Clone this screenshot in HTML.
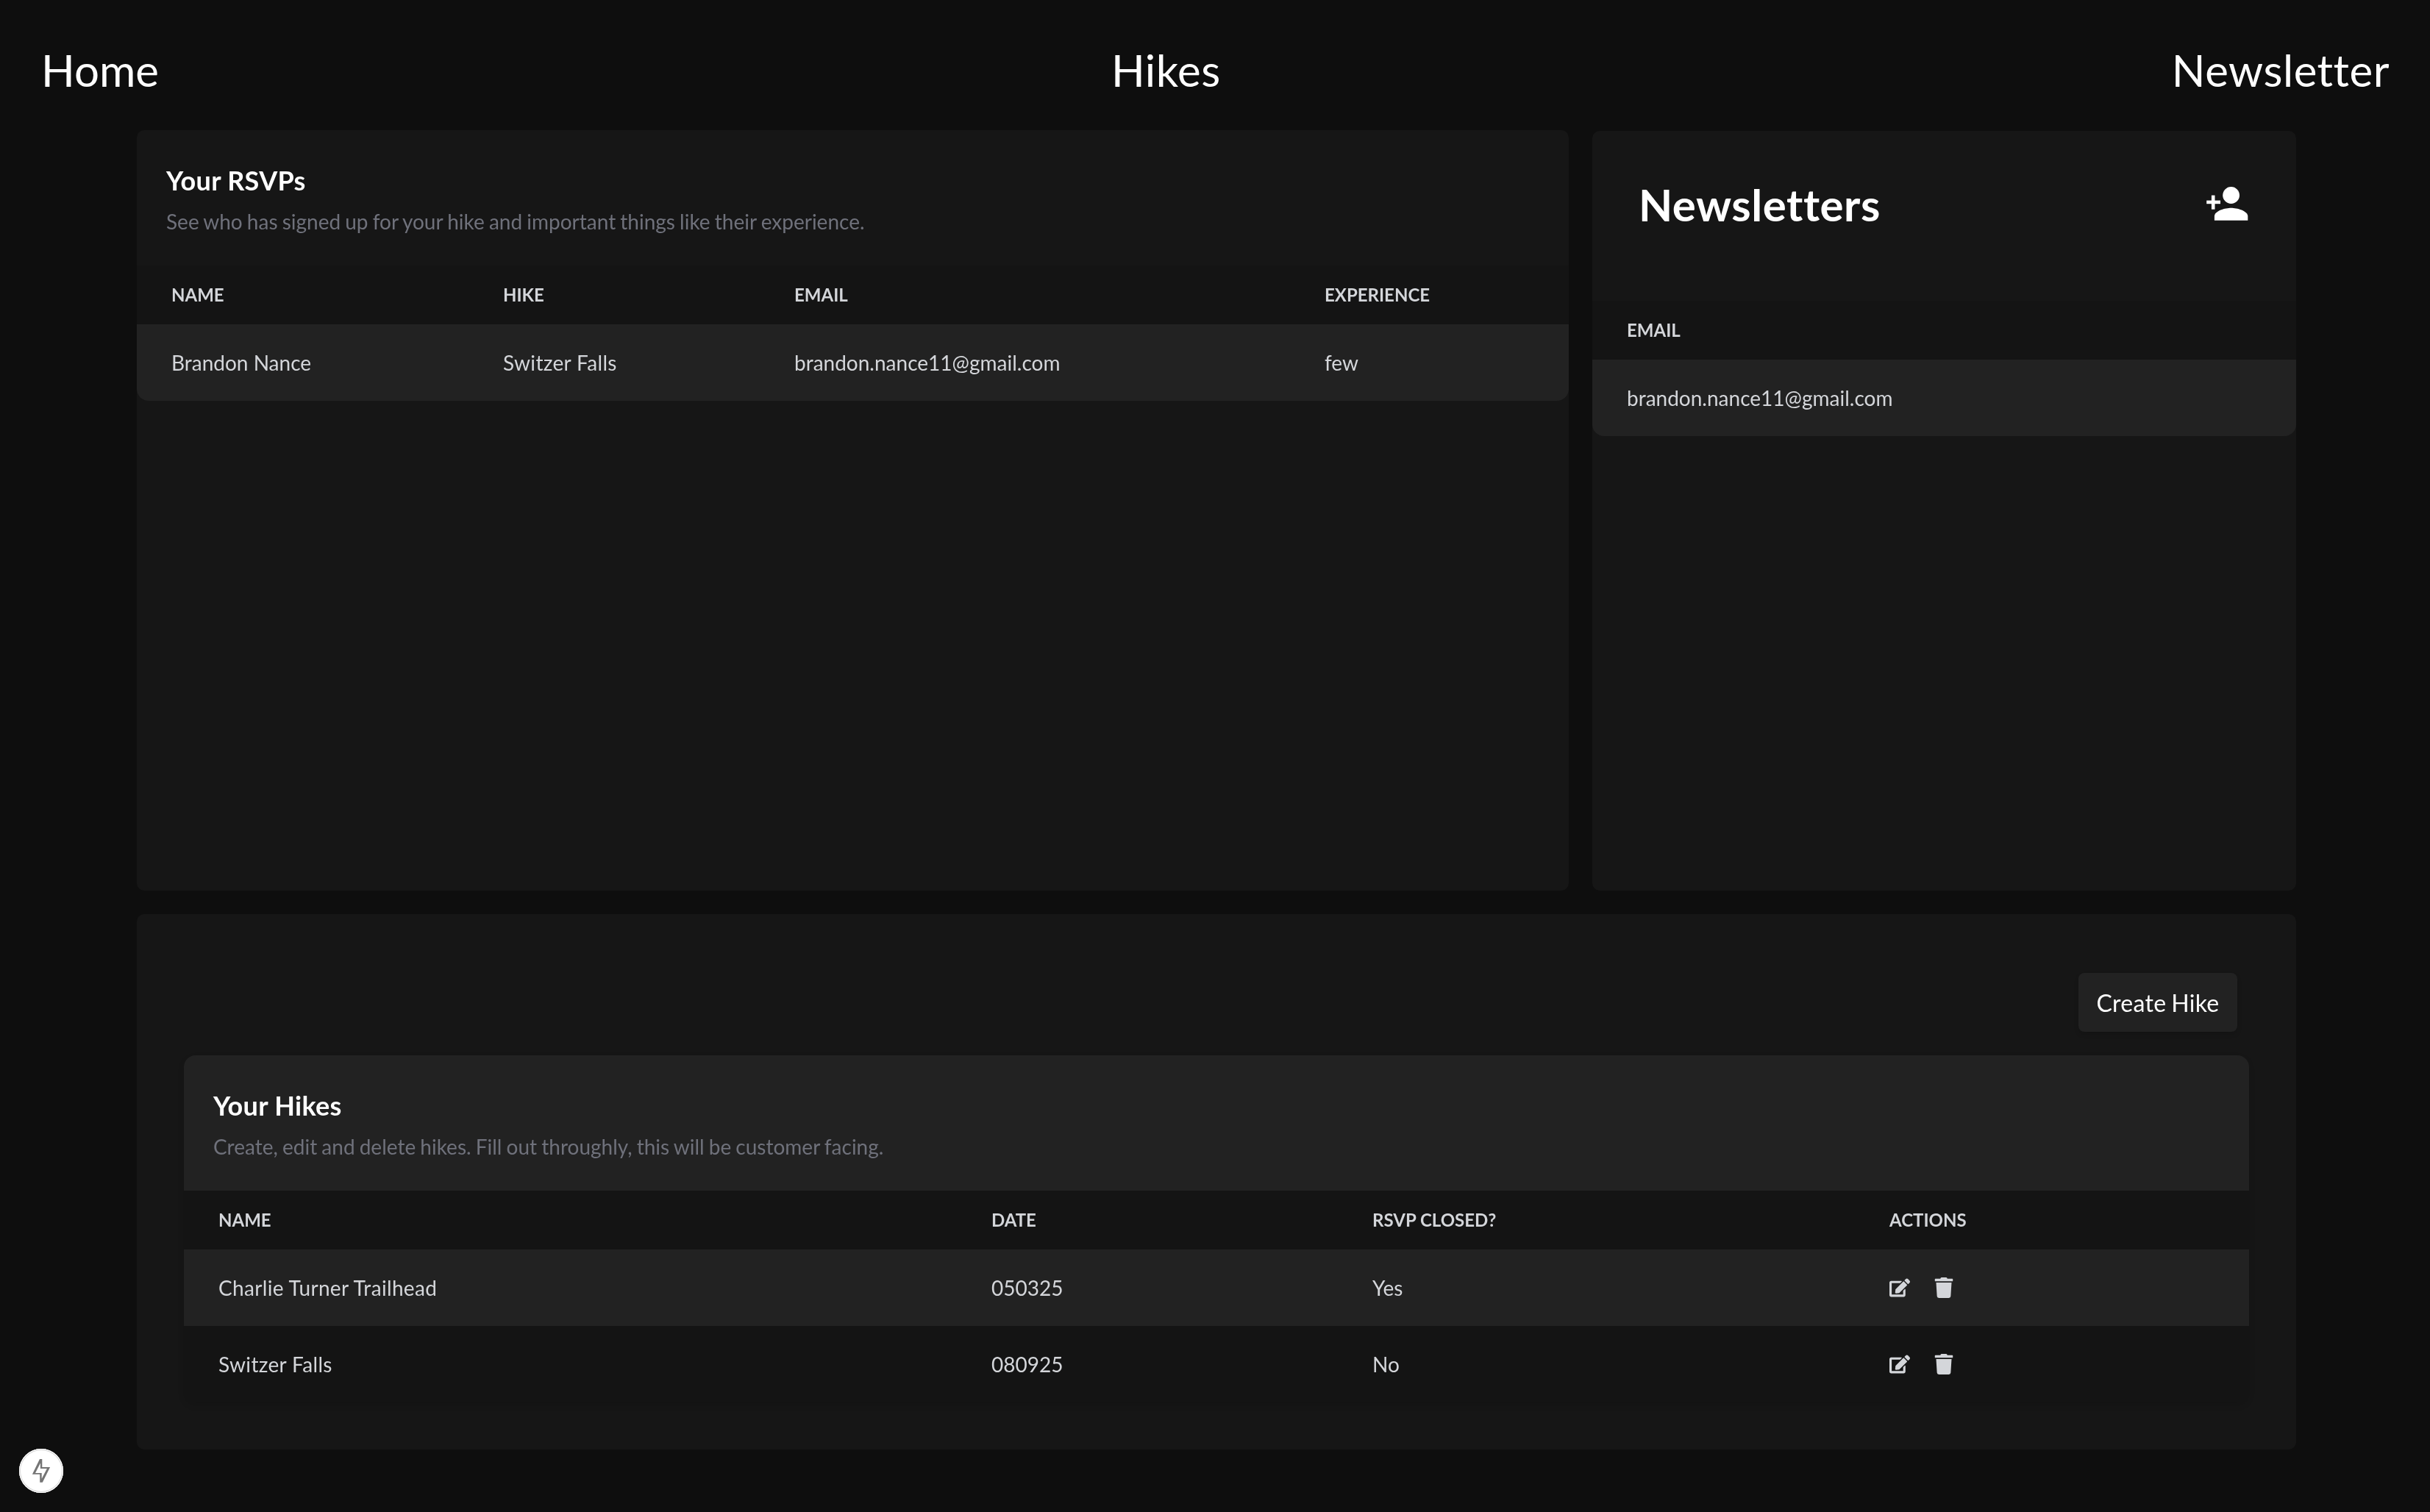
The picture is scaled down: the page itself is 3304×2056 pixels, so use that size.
<!DOCTYPE html>
<html lang="en">
<head>
<meta charset="utf-8">
<title>Admin Dashboard</title>
<style>
*{box-sizing:border-box;margin:0;padding:0}
html,body{width:3304px;height:2056px;overflow:hidden;background:#0e0e0e}
body{position:relative;font-family:Lato,"Liberation Sans",sans-serif;color:#fff;-webkit-font-smoothing:antialiased;font-kerning:normal}
#root{position:absolute;left:0;top:0;width:3304px;height:2056px;will-change:transform}
a{color:inherit;text-decoration:none}
nav a{position:absolute;top:59px;font-size:60px;line-height:72px;font-weight:400;color:#fff;white-space:nowrap}
nav .n1{left:56px}
nav .n2{left:1511px;letter-spacing:.5px}
nav .n3{right:55px;letter-spacing:.5px}
.card{position:absolute;background:#161616;border-radius:10px}
.tw{position:absolute;left:0;top:0;width:100%;border-radius:16px;overflow:hidden}
.cap{height:184px;padding:40px}
.cap h2{font-size:36px;line-height:56px;font-weight:700;color:#fff;letter-spacing:.3px}
.cap p{margin-top:8px;font-size:28px;line-height:40px;font-weight:400;color:#6f717b;white-space:nowrap;word-spacing:-1.04px}
table{width:100%;border-collapse:collapse;table-layout:fixed}
th,td{padding:0 48px 0 47px;text-align:left;vertical-align:middle;white-space:nowrap;color:#d4d6da}
thead tr{height:80px;background:#141414}
th{font-size:24px;line-height:32px;font-weight:700;text-transform:uppercase}
tbody tr{height:104px}
td{font-size:28px;line-height:40px;font-weight:400}
td.ls{letter-spacing:.33px}
tr.hi{background:#222}
tr.lo{background:#141414}
#rsvps{left:186px;top:177px;width:1947px;height:1034px}
#news{left:2165px;top:178px;width:957px;height:1033px}
#news .head{height:231px;position:relative}
#news h1{position:absolute;left:63px;top:64px;letter-spacing:.55px;font-size:60px;line-height:72px;font-weight:700;color:#fff}
#news .add{position:absolute;left:826px;top:65px;width:68px;height:68px}
#hikes{left:186px;top:1243px;width:2936px;height:728px}
#hikes .btn{position:absolute;left:2640px;top:80px;width:216px;height:80px;border-radius:8px;background:#222;color:#fff;font-size:32px;line-height:82px;letter-spacing:.32px;word-spacing:-1.8px;box-shadow:0 4px 6px rgba(0,0,0,.12);text-align:center;border:0;font-family:inherit}
#hikes .tw{left:64px;top:192px;width:2808px;box-shadow:0 4px 8px rgba(0,0,0,.12)}
#hikes .cap{background:#222}
.acts{display:flex;align-items:center;gap:32px}
.acts svg{width:28px;height:28px;fill:#d4d6da;display:block}
#dev{position:absolute;left:26px;top:1970px;width:60px;height:60px;border-radius:50%;background:#fff;box-shadow:inset 0 0 0 1px #fff,inset 0 0 0 2px #d6d6d6}
#dev svg{position:absolute;left:0;top:0;width:60px;height:60px}

/* metric compensation when Lato is unavailable and Liberation Sans is used */
.nl nav a{margin-top:2px}
.nl nav .n2{letter-spacing:-.5px}
.nl nav .n3{letter-spacing:1.28px}
.nl .cap h2{position:relative;top:2px}
.nl #rsvps h2{letter-spacing:-1.9px}
.nl #hikes h2{letter-spacing:-1.37px}
.nl .cap p{position:relative;top:1px;letter-spacing:-.15px}
.nl th,.nl td{position:relative;top:1px}
.nl th{letter-spacing:-.9px}
.nl td{letter-spacing:-.42px}
.nl td.ls{letter-spacing:-.25px}
.nl .acts{position:relative;top:-1px}
.nl #news h1{margin-top:2px;letter-spacing:-.75px}
.nl #hikes .btn{letter-spacing:-.25px;line-height:83px}
</style>
<script>(function(){try{var c=document.createElement("canvas").getContext("2d"),t="mmmmmmmmmmlliWQ@";c.font="72px monospace";var a=c.measureText(t).width;c.font="72px Lato,monospace";if(c.measureText(t).width===a)document.documentElement.className="nl"}catch(e){}try{var z=window.innerWidth/3304;if(z>0&&Math.abs(z-1)>.01)document.documentElement.style.zoom=z}catch(e){}})();</script>
</head>
<body>
<div id="root">
<nav>
<a class="n1" href="#">Home</a>
<a class="n2" href="#">Hikes</a>
<a class="n3" href="#">Newsletter</a>
</nav>

<section class="card" id="rsvps">
<div class="tw">
<div class="cap"><h2>Your RSVPs</h2><p>See who has signed up for your hike and important things like their experience.</p></div>
<table>
<colgroup><col style="width:451px"><col style="width:396px"><col style="width:721px"><col style="width:379px"></colgroup>
<thead><tr><th>NAME</th><th>HIKE</th><th>EMAIL</th><th>EXPERIENCE</th></tr></thead>
<tbody><tr class="hi"><td>Brandon Nance</td><td class="ls">Switzer Falls</td><td>brandon.nance11@gmail.com</td><td>few</td></tr></tbody>
</table>
</div>
</section>

<section class="card" id="news">
<div class="tw">
<div class="head"><h1>Newsletters</h1>
<svg class="add" viewBox="0 0 68 68"><g fill="#fff"><circle cx="42.6" cy="22.5" r="11.4"/><path d="M19.9 56.7v-5.6c0-7.6 15.100-11.400 22.700-11.400s22.700 3.800 22.700 11.400v5.600z"/><rect x="9.200" y="29.6" width="18.800" height="4.600"/><rect x="15.900" y="22.600" width="4.600" height="19.100"/></g></svg>
</div>
<table>
<thead><tr><th>EMAIL</th></tr></thead>
<tbody><tr class="hi"><td>brandon.nance11@gmail.com</td></tr></tbody>
</table>
</div>
</section>

<section class="card" id="hikes">
<button class="btn">Create Hike</button>
<div class="tw">
<div class="cap"><h2>Your Hikes</h2><p>Create, edit and delete hikes. Fill out throughly, this will be customer facing.</p></div>
<table>
<colgroup><col style="width:1051px"><col style="width:518px"><col style="width:703px"><col style="width:536px"></colgroup>
<thead><tr><th>NAME</th><th>DATE</th><th>RSVP CLOSED?</th><th>ACTIONS</th></tr></thead>
<tbody>
<tr class="hi"><td class="ls">Charlie Turner Trailhead</td><td>050325</td><td>Yes</td><td><div class="acts"><svg viewBox="0 0 576 512"><path d="M402.6 83.2l90.2 90.2c3.800 3.800 3.800 10 0 13.800L274.400 405.600l-92.800 10.300c-12.400 1.400-22.900-9.100-21.500-21.500l10.300-92.800L388.800 83.200c3.800-3.800 10-3.800 13.800 0zm162-22.900l-48.800-48.800c-15.200-15.200-39.900-15.200-55.200 0l-35.400 35.400c-3.800 3.800-3.800 10 0 13.800l90.200 90.200c3.800 3.800 10 3.800 13.800 0l35.400-35.400c15.200-15.300 15.200-40 0-55.200zM384 346.200V448H64V128h229.800c3.200 0 6.200-1.300 8.500-3.500l40-40c7.600-7.600 2.200-20.500-8.500-20.500H48C21.500 64 0 85.500 0 112v352c0 26.500 21.500 48 48 48h352c26.500 0 48-21.500 48-48V306.200c0-10.700-12.900-16-20.500-8.500l-40 40c-2.200 2.300-3.500 5.300-3.500 8.500z"/></svg><svg viewBox="0 0 448 512"><path d="M432 32H312l-9.400-18.700A24 24 0 0 0 281.100 0H166.800a23.720 23.720 0 0 0-21.400 13.300L136 32H16A16 16 0 0 0 0 48v32a16 16 0 0 0 16 16h416a16 16 0 0 0 16-16V48a16 16 0 0 0-16-16zM53.200 467a48 48 0 0 0 47.900 45h245.800a48 48 0 0 0 47.900-45L416 128H32z"/></svg></div></td></tr>
<tr class="lo"><td class="ls">Switzer Falls</td><td>080925</td><td>No</td><td><div class="acts"><svg viewBox="0 0 576 512"><path d="M402.6 83.2l90.2 90.2c3.800 3.800 3.800 10 0 13.800L274.400 405.600l-92.800 10.300c-12.400 1.400-22.900-9.100-21.500-21.500l10.300-92.800L388.800 83.200c3.800-3.800 10-3.800 13.800 0zm162-22.900l-48.800-48.800c-15.200-15.200-39.900-15.200-55.200 0l-35.400 35.400c-3.800 3.800-3.800 10 0 13.800l90.200 90.200c3.800 3.800 10 3.800 13.800 0l35.400-35.400c15.200-15.300 15.200-40 0-55.200zM384 346.200V448H64V128h229.800c3.200 0 6.200-1.300 8.500-3.500l40-40c7.600-7.600 2.200-20.500-8.500-20.500H48C21.500 64 0 85.500 0 112v352c0 26.500 21.500 48 48 48h352c26.500 0 48-21.500 48-48V306.200c0-10.700-12.900-16-20.500-8.500l-40 40c-2.200 2.300-3.500 5.300-3.500 8.500z"/></svg><svg viewBox="0 0 448 512"><path d="M432 32H312l-9.400-18.700A24 24 0 0 0 281.100 0H166.800a23.720 23.720 0 0 0-21.400 13.300L136 32H16A16 16 0 0 0 0 48v32a16 16 0 0 0 16 16h416a16 16 0 0 0 16-16V48a16 16 0 0 0-16-16zM53.200 467a48 48 0 0 0 47.900 45h245.800a48 48 0 0 0 47.900-45L416 128H32z"/></svg></div></td></tr>
</tbody>
</table>
</div>
</section>

<div id="dev"><svg viewBox="0 0 60 60"><path fill="#757575" fill-rule="evenodd" d="M28 14.100h3.300v10.800h10.800L31.800 45.800h-3.600V34.700H17.900zM28.900 19.600L22 32.900h8.700v7.900l7.200-13.800h-9z"/></svg></div>
</div>
</body>
</html>
